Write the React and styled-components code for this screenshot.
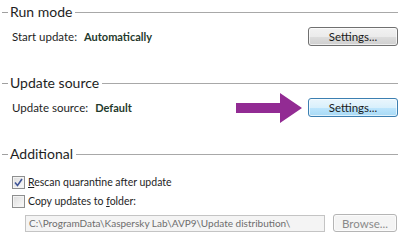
import React from 'react'
import styled, { createGlobalStyle } from 'styled-components'

const Global = createGlobalStyle`
  body {
    margin: 0;
    background: #fff;
    font-family: Lato, "Open Sans", sans-serif;
  }
`;

const Page = styled.div`
  width: 404px;
  height: 244px;
  padding: 4px 6px 0 2px;
  box-sizing: border-box;
  overflow: hidden;
`;

const Section = styled.section`
  margin-bottom: 29px;
`;

const Header = styled.div`
  display: flex;
  align-items: center;
  height: 16px;
  &::before {
    content: '';
    width: 6px;
    height: 1px;
    background: #a0a0a0;
    margin-right: 2px;
  }
  &::after {
    content: '';
    flex: 1;
    height: 1px;
    background: #a8a8a8;
    margin-left: 3px;
  }
`;

const Title = styled.span`
  font-size: 14px;
  color: #1e1e1e;
  line-height: 16px;
`;

const Row = styled.div`
  display: flex;
  align-items: center;
  margin-top: 7px;
  padding-left: 10px;
  height: 19px;
  font-size: 11.5px;
  color: #1e1e1e;
`;

const Value = styled.span`
  font-weight: bold;
  font-size: 11px;
  color: #1f3a2c;
  margin-left: 7px;
  flex: 1;
`;

const Button = styled.button`
  width: ${(p) => p.$w || 90}px;
  height: ${(p) => p.$h || 19}px;
  padding: 0;
  font-family: inherit;
  font-size: 11.5px;
  color: ${(p) => (p.disabled ? '#8a8a8a' : '#1a1a1a')};
  border: 1px solid ${(p) => (p.$active ? '#3c7fb1' : p.disabled ? '#b5b5b5' : '#707070')};
  border-radius: 3px;
  background: ${(p) =>
    p.$active
      ? 'linear-gradient(#eaf6fd 0%, #d9f0fc 50%, #bee6fd 51%, #a7d9f5 100%)'
      : p.disabled
      ? '#f4f4f4'
      : 'linear-gradient(#f2f2f2 0%, #ebebeb 50%, #dddddd 51%, #cfcfcf 100%)'};
  box-shadow: inset 0 0 0 1px rgba(255, 255, 255, 0.65);
`;

const Arrow = styled.svg`
  width: 66px;
  height: 30px;
  margin-right: 6px;
`;

const CheckRow = styled.label`
  display: flex;
  align-items: center;
  gap: 3px;
  padding-left: 10px;
  height: 16px;
  margin-top: ${(p) => p.$top}px;
  font-size: 10.5px;
  color: #1e1e1e;
`;

const Box = styled.span`
  width: 11px;
  height: 11px;
  border: 1px solid #8e8f8f;
  background: linear-gradient(135deg, #dcdcdc, #fbfbfb);
  box-shadow: inset 0 0 0 1px #f4f4f4;
  display: flex;
  align-items: center;
  justify-content: center;
`;

const PathRow = styled.div`
  display: flex;
  align-items: center;
  margin-top: 5px;
  padding-left: 23px;
  gap: 8px;
`;

const PathField = styled.div`
  width: 300px;
  height: 17px;
  box-sizing: border-box;
  border: 1px solid #c4c4c4;
  background: #f4f4f4;
  color: #6d6d6d;
  font-size: 10px;
  line-height: 15px;
  padding-left: 3px;
  white-space: nowrap;
  overflow: hidden;
`;

const Checkbox = ({ checked }) => (
  <Box>
    {checked && (
      <svg width="9" height="9" viewBox="0 0 9 9">
        <path d="M1 4.5 L3.5 7.5 L8 1" fill="none" stroke="#3f5598" strokeWidth="1.6" />
      </svg>
    )}
  </Box>
);

const App = () => {
  return (
    <Page>
      <Global />
      <Section>
        <Header>
          <Title>Run mode</Title>
        </Header>
        <Row>
          Start update:
          <Value>Automatically</Value>
          <Button>Settings...</Button>
        </Row>
      </Section>
      <Section>
        <Header>
          <Title>Update source</Title>
        </Header>
        <Row>
          Update source:
          <Value>Default</Value>
          <Arrow viewBox="0 0 66 30">
            <path d="M0 10 H44 V0 L66 15 L44 30 V20 H0 Z" fill="#922b93" />
          </Arrow>
          <Button $active>Settings...</Button>
        </Row>
      </Section>
      <Section>
        <Header>
          <Title>Additional</Title>
        </Header>
        <CheckRow $top={12}>
          <Checkbox checked />
          <span>
            <u>R</u>escan quarantine after update
          </span>
        </CheckRow>
        <CheckRow $top={3}>
          <Checkbox />
          <span>
            Copy updates to <u>f</u>older:
          </span>
        </CheckRow>
        <PathRow>
          <PathField>C:\ProgramData\Kaspersky Lab\AVP9\Update distribution\</PathField>
          <Button disabled $w={64} $h={18}>Browse...</Button>
        </PathRow>
      </Section>
    </Page>
  );
};

export default App
